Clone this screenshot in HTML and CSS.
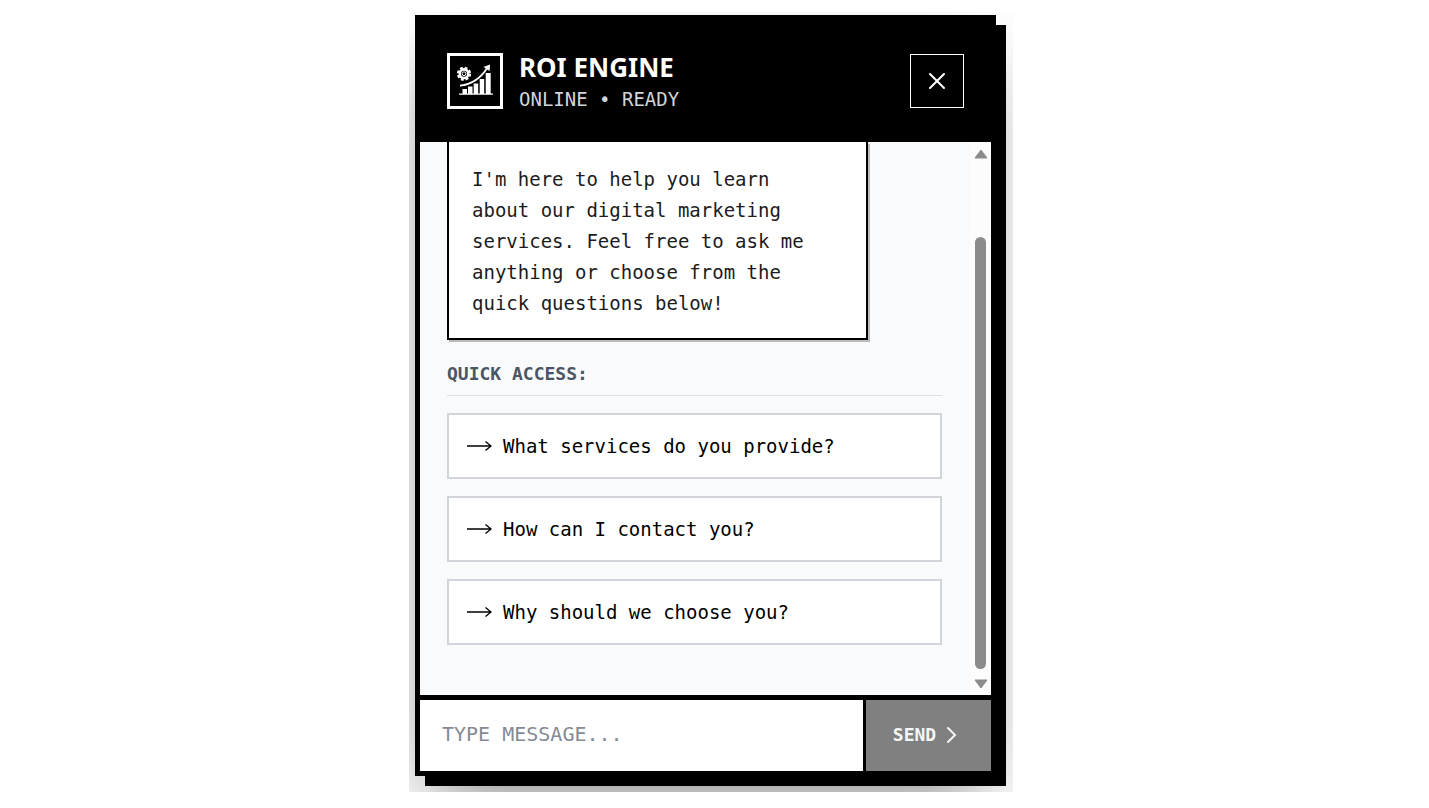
FILE: index.html
```html
<!DOCTYPE html>
<html lang="en">
<head>
  <meta charset="UTF-8" />
  <meta name="viewport" content="width=device-width, initial-scale=1.0"/>
  <title>ROI Engine</title>
  <link rel="stylesheet" href="styles.css">
</head>
<body>
  <main class="stage">
    <section class="chat">
      <header class="chat-header">
        <div class="logo">
          <svg viewBox="3 3 50 50" fill="#fff" aria-hidden="true">
            <circle cx="17" cy="20.7" r="4.3" fill="none" stroke="#fff" stroke-width="2.6"/>
            <circle cx="17" cy="20.7" r="6.2" fill="none" stroke="#fff" stroke-width="1.800" stroke-dasharray="2.9 1.97"/>
            <circle cx="17" cy="20.7" r="1.900" fill="none" stroke="#fff" stroke-width="1"/>
            <path d="M13 32.7C24 31.5 34 25 40.500 14.500" fill="none" stroke="#fff" stroke-width="1.800"/>
            <path d="M43 11.500L42.600 18L36.500 14z"/>
            <path d="M15.500 36h4.500v5h-4.500zM21 33.500h4.500V41H21zM26.700 30.500h4.500V41h-4.500zM32.700 26h4.500v15h-4.500zM38.700 20h5v21h-5z"/>
            <path d="M12 40.500h34v1.200H12z"/>
          </svg>
        </div>
        <div class="heading">
          <h1>ROI ENGINE</h1>
          <p>ONLINE • READY</p>
        </div>
        <button class="close" type="button" aria-label="Close">
          <svg width="18" height="18" viewBox="0 0 18 18" aria-hidden="true"><path d="M2 2l14 14M16 2L2 16"/></svg>
        </button>
      </header>

      <div class="chat-body">
        <div class="messages">
          <div class="bubble">I'm here to help you learn about our digital marketing services. Feel free to ask me anything or choose from the quick questions below!</div>
          <h2>QUICK ACCESS:</h2>
          <div class="questions">
            <button type="button">
              <svg width="26" height="12" viewBox="0 0 26 12" aria-hidden="true"><path d="M1 6h24M19.500 1.500L25 6l-5.500 4.500"/></svg>
              What services do you provide?
            </button>
            <button type="button">
              <svg width="26" height="12" viewBox="0 0 26 12" aria-hidden="true"><path d="M1 6h24M19.500 1.500L25 6l-5.500 4.500"/></svg>
              How can I contact you?
            </button>
            <button type="button">
              <svg width="26" height="12" viewBox="0 0 26 12" aria-hidden="true"><path d="M1 6h24M19.500 1.500L25 6l-5.500 4.500"/></svg>
              Why should we choose you?
            </button>
          </div>
        </div>
        <div class="scrollbar" aria-hidden="true">
          <svg width="14" height="10" viewBox="0 0 14 10"><path d="M7 1L13 9H1z"/></svg>
          <div class="track"><div class="thumb"></div></div>
          <svg width="14" height="10" viewBox="0 0 14 10"><path d="M7 9L13 1H1z"/></svg>
        </div>
      </div>

      <form class="composer">
        <input type="text" placeholder="TYPE MESSAGE..." aria-label="Type message">
        <button type="button">
          SEND
          <svg width="12" height="18" viewBox="0 0 12 18" aria-hidden="true"><path d="M2 2l7 7l-7 7"/></svg>
        </button>
      </form>
    </section>
  </main>
</body>
</html>
```
FILE: styles.css
```css
* {
  box-sizing: border-box;
}

body {
  margin: 0;
  padding: 12px 7px 16px 0;
  min-height: 100vh;
  display: flex;
  justify-content: center;
  background: #fff;
  font-family: "DejaVu Sans Mono", monospace;
}

h1, h2, p {
  margin: 0;
}

button, input {
  font-family: inherit;
  border: none;
  border-radius: 0;
}

button {
  cursor: pointer;
}

svg {
  flex-shrink: 0;
}

.stage {
  width: 100%;
  max-width: 604px;
  padding: 3px 17px 16px 6px;
  display: flex;
  overflow: hidden;
}

.chat {
  flex: 1;
  min-width: 0;
  display: flex;
  flex-direction: column;
  border: 5px solid #000;
  border-top: none;
  background: #000;
  box-shadow: 10px 10px 0 #000, 0 35px 70px -17px rgba(0,0,0,0.5);
}

/* header */
.chat-header {
  display: flex;
  align-items: center;
  gap: 16px;
  padding: 35px 27px 31px;
  color: #fff;
}

.logo {
  width: 56px;
  height: 56px;
  border: 3px solid #fff;
}

.logo svg {
  display: block;
}

.heading {
  flex: 1;
}

.heading h1 {
  font-family: "Noto Sans", sans-serif;
  font-size: 26px;
  line-height: 34px;
  font-weight: bold;
}

.heading p {
  font-size: 19px;
  line-height: 24px;
  padding-top: 3px;
  color: #d1d5db;
}

.close {
  width: 54px;
  height: 54px;
  display: flex;
  align-items: center;
  justify-content: center;
  background: #000;
  border: 1px solid #fff;
}

.close path {
  fill: none;
  stroke: #fff;
  stroke-width: 2;
  stroke-linecap: round;
}

/* conversation */
.chat-body {
  flex: 1;
  display: flex;
  background: #f9fafc;
}

.messages {
  flex: 1;
  padding: 0 28px 20px 27px;
}

.bubble {
  max-width: 85%;
  padding: 22px 36px 19px 23px;
  background: #fff;
  border: 2px solid #000;
  border-top: none;
  box-shadow: 2px 2px 0 rgba(0,0,0,0.25);
  color: #1c1c1c;
  font-size: 19px;
  line-height: 31px;
}

.messages h2 {
  margin: 21px 0 17px;
  padding-bottom: 9px;
  border-bottom: 1px solid #dcdfe5;
  color: #4b5563;
  font-size: 18px;
  line-height: 25px;
}

.questions {
  display: flex;
  flex-direction: column;
  gap: 17px;
}

.questions button {
  display: flex;
  align-items: center;
  gap: 11px;
  height: 66px;
  padding: 0 17px;
  background: #fff;
  border: 2px solid #d1d5db;
  color: #000;
  font-size: 19px;
  text-align: left;
}

.questions path {
  fill: none;
  stroke: #000;
  stroke-width: 1.3;
}

.scrollbar {
  width: 21px;
  padding: 7px 0 6px;
  display: flex;
  flex-direction: column;
  align-items: center;
  background: #fcfcfc;
}

.scrollbar path {
  fill: #8b8b8b;
  stroke: #8b8b8b;
  stroke-linejoin: round;
}

.track {
  flex: 1;
  width: 11px;
  padding: 78px 0 10px;
  display: flex;
}

.thumb {
  flex: 1;
  border-radius: 6px;
  background: #8b8b8b;
}

/* message box */
.composer {
  display: flex;
  height: 76px;
  border-top: 5px solid #000;
}

.composer input {
  flex: 1;
  min-width: 0;
  padding: 0 22px 4px;
  background: #fff;
  font-size: 20px;
}

.composer input::placeholder {
  color: #858a93;
}

.composer button {
  width: 128px;
  display: flex;
  align-items: center;
  justify-content: center;
  gap: 10px;
  padding: 0 6px 2px 0;
  background: #808080;
  border-left: 3px solid #000;
  color: #f5f5f5;
  font-size: 18px;
  font-weight: bold;
}

.composer button path {
  fill: none;
  stroke: #f5f5f5;
  stroke-width: 2;
  stroke-linecap: round;
}
```
